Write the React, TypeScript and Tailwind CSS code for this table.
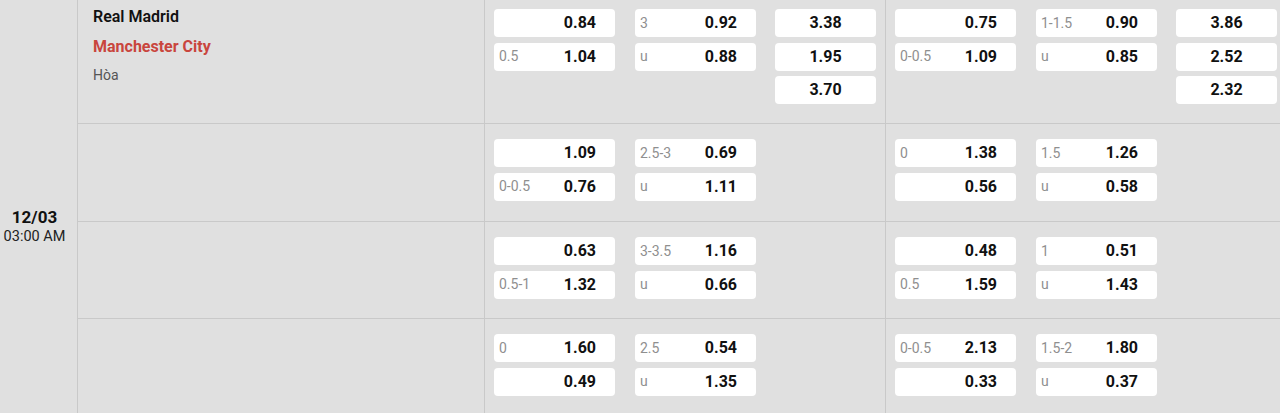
const font = { fontFamily: 'Roboto, "Noto Sans", sans-serif' };

type Cell = { label?: string; value: string };
type Market = { hdp: Cell[]; ou: Cell[]; x12?: string[] };
type Row = { left: Market; right: Market };

const rows: Row[] = [
  {
    left: {
      hdp: [{ value: '0.84' }, { label: '0.5', value: '1.04' }],
      ou: [{ label: '3', value: '0.92' }, { label: 'u', value: '0.88' }],
      x12: ['3.38', '1.95', '3.70'],
    },
    right: {
      hdp: [{ value: '0.75' }, { label: '0-0.5', value: '1.09' }],
      ou: [{ label: '1-1.5', value: '0.90' }, { label: 'u', value: '0.85' }],
      x12: ['3.86', '2.52', '2.32'],
    },
  },
  {
    left: {
      hdp: [{ value: '1.09' }, { label: '0-0.5', value: '0.76' }],
      ou: [{ label: '2.5-3', value: '0.69' }, { label: 'u', value: '1.11' }],
    },
    right: {
      hdp: [{ label: '0', value: '1.38' }, { value: '0.56' }],
      ou: [{ label: '1.5', value: '1.26' }, { label: 'u', value: '0.58' }],
    },
  },
  {
    left: {
      hdp: [{ value: '0.63' }, { label: '0.5-1', value: '1.32' }],
      ou: [{ label: '3-3.5', value: '1.16' }, { label: 'u', value: '0.66' }],
    },
    right: {
      hdp: [{ value: '0.48' }, { label: '0.5', value: '1.59' }],
      ou: [{ label: '1', value: '0.51' }, { label: 'u', value: '1.43' }],
    },
  },
  {
    left: {
      hdp: [{ label: '0', value: '1.60' }, { value: '0.49' }],
      ou: [{ label: '2.5', value: '0.54' }, { label: 'u', value: '1.35' }],
    },
    right: {
      hdp: [{ label: '0-0.5', value: '2.13' }, { value: '0.33' }],
      ou: [{ label: '1.5-2', value: '1.80' }, { label: 'u', value: '0.37' }],
    },
  },
];

// row heights incl. bottom border
const rowHeights = ['h-[124px]', 'h-[98px]', 'h-[97px]', 'h-[97px]'];

function OddBox({ cell }: { cell: Cell }) {
  return (
    <div className="relative flex h-[28px] w-[121px] items-center justify-end rounded bg-white pr-[19px]">
      {cell.label && (
        <span className="absolute left-[5px] text-[14px] text-[#8f8f8f]">{cell.label}</span>
      )}
      <span className="text-[16px] font-bold text-[#111]">{cell.value}</span>
    </div>
  );
}

function MarketGroup({ market, first }: { market: Market; first: boolean }) {
  return (
    <div
      className={`flex w-[401px] shrink-0 gap-5 border-r border-[#c9c9c9] pl-[9px] ${
        first ? 'pt-[9px]' : 'pt-[15px]'
      }`}
    >
      <div className="flex flex-col gap-[5.5px]">
        {market.hdp.map((c, i) => (
          <OddBox key={i} cell={c} />
        ))}
      </div>
      <div className="flex flex-col gap-[5.5px]">
        {market.ou.map((c, i) => (
          <OddBox key={i} cell={c} />
        ))}
      </div>
      {market.x12 && (
        <div className="-ml-px flex flex-col gap-[5.5px]">
          {market.x12.map((v, i) => (
            <div
              key={i}
              className="flex h-[28px] w-[101px] items-center justify-center rounded bg-white text-[16px] font-bold text-[#111]"
            >
              {v}
            </div>
          ))}
        </div>
      )}
    </div>
  );
}

export default function App() {
  return (
    <div className="flex h-[413px] w-[1280px] overflow-hidden bg-[#e0e0e0]" style={font}>
      {/* date column */}
      <div className="flex w-[78px] shrink-0 flex-col items-center border-r border-[#c9c9c9] pr-[8px] pt-[206px]">
        <div className="text-[17px] font-bold leading-[22px] text-[#111]">12/03</div>
        <div className="whitespace-nowrap text-[14.5px] leading-[18px] text-[#222]">03:00 AM</div>
      </div>

      <div className="flex flex-col">
        {rows.map((row, i) => (
          <div key={i} className={`flex shrink-0 border-b border-[#c9c9c9] ${rowHeights[i]}`}>
            <div className="w-[407px] shrink-0 border-r border-[#c9c9c9] pl-[15px]">
              {i === 0 && (
                <div className="flex flex-col pt-[4px]">
                  <span className="text-[16px] font-semibold leading-[26px] text-[#111]">Real Madrid</span>
                  <span className="text-[16px] font-bold leading-[33px] text-[#c9453d]">
                    Manchester City
                  </span>
                  <span className="text-[14px] leading-[24px] text-[#555]">Hòa</span>
                </div>
              )}
            </div>
            <MarketGroup market={row.left} first={i === 0} />
            <MarketGroup market={row.right} first={i === 0} />
          </div>
        ))}
      </div>
    </div>
  );
}
